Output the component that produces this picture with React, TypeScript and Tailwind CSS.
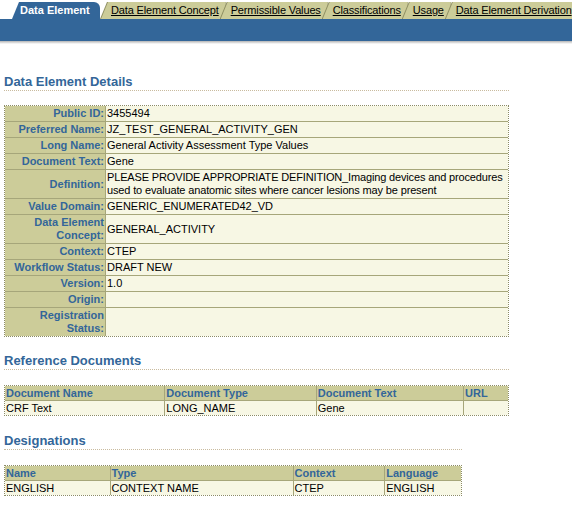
import React from 'react';

const tabs = ['Data Element Concept', 'Permissible Values', 'Classifications', 'Usage', 'Data Element Derivation'];

const details: { label: string; value: React.ReactNode }[] = [
  { label: 'Public ID:', value: '3455494' },
  { label: 'Preferred Name:', value: 'JZ_TEST_GENERAL_ACTIVITY_GEN' },
  { label: 'Long Name:', value: 'General Activity Assessment Type Values' },
  { label: 'Document Text:', value: 'Gene' },
  {
    label: 'Definition:',
    value: (
      <span className="tracking-[-0.15px]">
        <span className="whitespace-nowrap">PLEASE PROVIDE APPROPRIATE DEFINITION_Imaging devices and procedures</span>
        <br />
        used to evaluate anatomic sites where cancer lesions may be present
      </span>
    ),
  },
  { label: 'Value Domain:', value: 'GENERIC_ENUMERATED42_VD' },
  { label: 'Data Element Concept:', value: 'GENERAL_ACTIVITY' },
  { label: 'Context:', value: 'CTEP' },
  { label: 'Workflow Status:', value: 'DRAFT NEW' },
  { label: 'Version:', value: '1.0' },
  { label: 'Origin:', value: '' },
  { label: 'Registration Status:', value: '' },
];

const SectionHeading = ({ title }: { title: string }) => (
  <h2 className="text-[13px] font-bold leading-[16px] text-[#336699] border-b border-dotted border-[#c9bb9f]">{title}</h2>
);

interface ListTableProps {
  widths: number[];
  headers: string[];
  row: string[];
}

const ListTable = ({ widths, headers, row }: ListTableProps) => (
  <table className="mt-[15px] table-fixed border-separate border-spacing-0 border border-dotted border-[#8c8c66] text-[11px] leading-[13px]">
    <colgroup>
      {widths.map((w, i) => (
        <col key={i} style={{ width: w }} />
      ))}
    </colgroup>
    <tbody>
      <tr>
        {headers.map((h, i) => (
          <th
            key={h}
            className={
              i < headers.length - 1
                ? 'bg-[#cccc99] text-left font-bold text-[#336699] pl-[1px] pt-[1px] border-b border-r border-[#a6a67a]'
                : 'bg-[#cccc99] text-left font-bold text-[#336699] pl-[1px] pt-[1px] border-b border-[#a6a67a]'
            }
          >
            {h}
          </th>
        ))}
      </tr>
      <tr>
        {row.map((c, i) => (
          <td
            key={i}
            className={
              i < row.length - 1
                ? 'bg-[#f7f7e4] pl-[1px] pt-[1px] text-black border-r border-[#a6a67a]'
                : 'bg-[#f7f7e4] pl-[1px] pt-[1px] text-black'
            }
          >
            {c || '\u00a0'}
          </td>
        ))}
      </tr>
    </tbody>
  </table>
);

export default function App() {
  return (
    <div className="min-h-[509px] w-[576px] bg-white font-['Liberation_Sans',Arial,sans-serif] text-black">
      {/* tab strip */}
      <div className="w-[572px] pt-[2px]">
        <div className="flex h-[17px] overflow-hidden text-[11px] leading-[17px]">
          <div className="ml-[12px] w-[88px] shrink-0 rounded-tr-[6px] bg-[#336699] pl-[8px] font-bold text-white [clip-path:polygon(7px_0,100%_0,100%_100%,0_100%)]">
            Data Element
          </div>
          {tabs.map((t, i) => (
            <div
              key={t}
              className={
                i === 0
                  ? 'shrink-0 bg-[#8e8e62] [clip-path:polygon(7px_0,100%_0,100%_100%,0_100%)]'
                  : '-ml-[6px] shrink-0 bg-[#8e8e62] [clip-path:polygon(7px_0,100%_0,100%_100%,0_100%)]'
              }
            >
              <div className="ml-[1px] bg-[#cccc99] pl-[10px] pr-[7px] tracking-[-0.15px] [clip-path:polygon(7px_0,100%_0,100%_100%,0_100%)]">
                <span className="underline">{t}</span>
              </div>
            </div>
          ))}
        </div>
        <div className="h-[22px] bg-[#336699]" />
        <div className="h-[3px] bg-gradient-to-b from-[#b4b4b4] to-white" />
      </div>

      <div className="px-[4px]">
        {/* details */}
        <section className="mt-[30px] w-[505px]">
          <SectionHeading title="Data Element Details" />
          <table className="mt-[14px] w-[505px] table-fixed border-separate border-spacing-0 border border-dotted border-[#8c8c66] text-[11px] leading-[13px]">
            <colgroup>
              <col style={{ width: 101 }} />
              <col />
            </colgroup>
            <tbody>
              {details.map((d, i) => {
                const last = i === details.length - 1;
                return (
                  <tr key={d.label}>
                    <td
                      className={
                        last
                          ? 'bg-[#cccc99] pr-[1px] py-[1px] text-right align-middle font-bold text-[#336699] border-r border-[#a6a67a]'
                          : 'bg-[#cccc99] pr-[1px] py-[1px] text-right align-middle font-bold text-[#336699] border-r border-b border-[#a6a67a]'
                      }
                    >
                      {d.label}
                    </td>
                    <td
                      className={
                        last
                          ? 'bg-[#f7f7e4] pl-[1px] py-[1px] align-middle'
                          : 'bg-[#f7f7e4] pl-[1px] py-[1px] align-middle border-b border-[#a6a67a]'
                      }
                    >
                      {d.value || '\u00a0'}
                    </td>
                  </tr>
                );
              })}
            </tbody>
          </table>
        </section>

        {/* reference documents */}
        <section className="mt-[16px] w-[505px]">
          <SectionHeading title="Reference Documents" />
          <ListTable
            widths={[161, 152, 148, 44]}
            headers={['Document Name', 'Document Type', 'Document Text', 'URL']}
            row={['CRF Text', 'LONG_NAME', 'Gene', '']}
          />
        </section>

        {/* designations */}
        <section className="mt-[17px] w-[458px]">
          <SectionHeading title="Designations" />
          <ListTable
            widths={[106, 184, 92, 76]}
            headers={['Name', 'Type', 'Context', 'Language']}
            row={['ENGLISH', 'CONTEXT NAME', 'CTEP', 'ENGLISH']}
          />
        </section>
      </div>
    </div>
  );
}
